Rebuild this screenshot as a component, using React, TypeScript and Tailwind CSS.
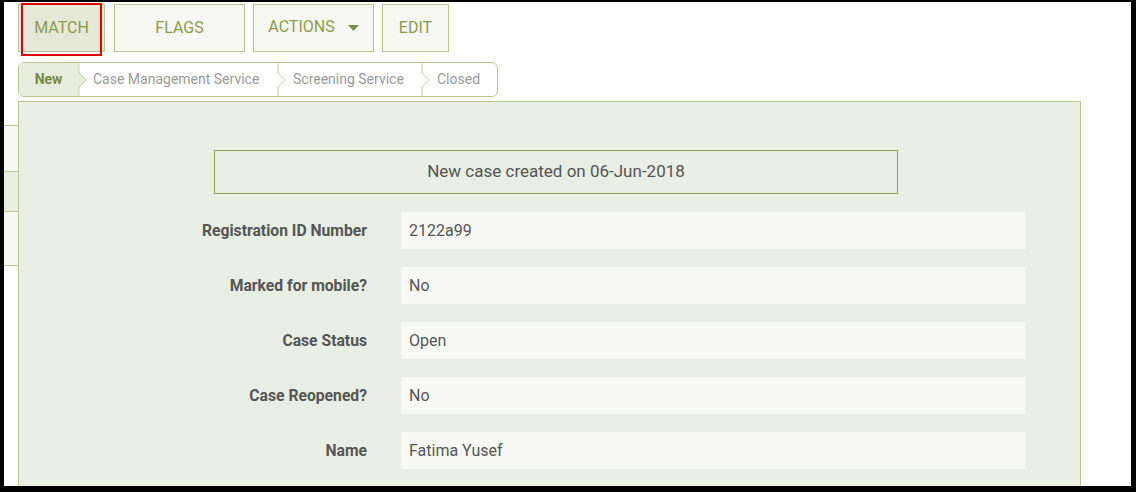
import React from 'react';

const buttons = [
  { label: 'MATCH', w: 'w-[87px]', gap: 'mr-[9px]', active: true },
  { label: 'FLAGS', w: 'w-[131px]', gap: 'mr-[8px]' },
  { label: 'ACTIONS', w: 'w-[121px]', gap: 'mr-[8px]', caret: true },
  { label: 'EDIT', w: 'w-[67px]', gap: '' },
];

const steps = [
  { label: 'Case Management Service', w: 'w-[189px]', pad: 'pl-[5px]' },
  { label: 'Screening Service', w: 'w-[134px]', pad: 'pl-[6px]' },
  { label: 'Closed', w: 'flex-1', pad: 'pl-[6px]' },
];

const fields = [
  { label: 'Registration ID Number', value: '2122a99' },
  { label: 'Marked for mobile?', value: 'No' },
  { label: 'Case Status', value: 'Open' },
  { label: 'Case Reopened?', value: 'No' },
  { label: 'Name', value: 'Fatima Yusef' },
];

const Chevron = ({ fill }: { fill?: boolean }) => (
  <svg width="10" height="34" viewBox="0 0 10 34" className="shrink-0">
    {fill && <path d="M0 0 H1 V10 L8 17 L1 24 V34 H0 Z" fill="#e8eddf" />}
    <path d="M1 0 V10 L8 17 L1 24 V34" fill="none" stroke="#c3d3a4" strokeWidth="1" />
  </svg>
);

export default function App() {
  return (
    <div className="w-[1136px] h-[492px] bg-black pt-[2px] pl-[4px] pr-[5px] pb-[6px] overflow-hidden" style={{ fontFamily: 'Roboto, "Liberation Sans", sans-serif' }}>
      <div className="relative flex h-full bg-white overflow-hidden">
        {/* partly hidden side menu */}
        <div className="w-[14px] shrink-0 mt-[123px]">
          <div className="h-[46px] bg-[#f8f9f4] border-t border-[#b3c98d]" />
          <div className="h-[40px] bg-[#e9efe4] border-t border-[#b3c98d]" />
          <div className="h-[55px] bg-[#f8f9f4] border-t border-b border-[#b3c98d]" />
        </div>

        <div className="flex-1 pt-[2px]">
          <div className="flex">
            {buttons.map((b) => (
              <div
                key={b.label}
                className={`${b.w} ${b.gap} h-[48px] flex items-center justify-center border border-[#b5c98f] text-[16px] text-[#8c9a4e] ${b.active ? 'bg-[#e6e9d8]' : 'bg-[#f7f8f2]'}`}
              >
                <span className={b.caret ? 'mb-[3px]' : ''}>{b.label}</span>
                {b.caret && (
                  <svg width="11" height="6" viewBox="0 0 11 6" className="ml-[13px]">
                    <path d="M0 0 H11 L5.5 6 Z" fill="#7d8f4a" />
                  </svg>
                )}
              </div>
            ))}
          </div>

          <div className="mt-[10px] w-[480px] h-[35px] flex items-stretch border border-[#b5c98f] rounded-[6px] overflow-hidden text-[14px]">
            <div className="w-[59px] bg-[#e8eddf] flex items-center justify-center font-bold text-[#77893f]">New</div>
            <Chevron fill />
            {steps.map((s, i) => (
              <React.Fragment key={s.label}>
                <div className={`${s.w} ${s.pad} flex items-center text-[#9a9a9a] whitespace-nowrap`}>{s.label}</div>
                {i < steps.length - 1 && <Chevron />}
              </React.Fragment>
            ))}
          </div>

          <div className="mt-[4px] w-[1063px] h-[400px] bg-[#e9efe4] border border-[#b3c98d] pt-[48px] pl-[195px]">
            <div className="w-[684px] h-[44px] border border-[#86a552] flex items-center justify-center text-[17px] text-[#555]">
              New case created on 06-Jun-2018
            </div>
            <div className="mt-[18px] flex flex-col gap-[18px] -ml-[195px]">
              {fields.map((f) => (
                <div key={f.label} className="flex items-center">
                  <div className="w-[348px] text-right text-[15.7px] font-bold text-[#555]">{f.label}</div>
                  <div className="ml-[34px] w-[624px] h-[37px] bg-[#f8f9f4] flex items-center pl-[8px] text-[16px] text-[#555]">{f.value}</div>
                </div>
              ))}
            </div>
          </div>
        </div>

        {/* highlight annotation */}
        <div className="absolute left-[17px] top-[1px] w-[81px] h-[53px] border-2 border-[#e00000] pointer-events-none" />
      </div>
    </div>
  );
}
